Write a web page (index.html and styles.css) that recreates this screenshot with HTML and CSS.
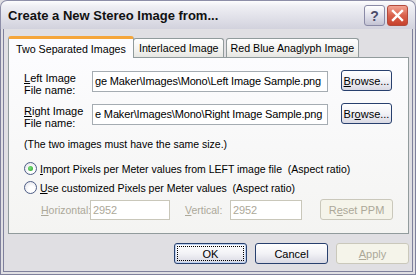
FILE: index.html
```html
<!DOCTYPE html>
<html lang="en">
  <head>
    <meta charset="UTF-8" />
    <title>Create a New Stereo Image from...</title>
    <link rel="stylesheet" href="styles.css">
  </head>
  <body>
    <div class="window">
      <div class="titlebar">
        <span class="title">Create a New Stereo Image from...</span>
        <div class="caption-btn help">?</div>
        <div class="caption-btn close">
          <svg width="13" height="13" viewBox="0 0 13 13">
            <path d="M2 2 L11 11 M11 2 L2 11" stroke="#fff" stroke-width="2.4" stroke-linecap="square" />
          </svg>
        </div>
      </div>

      <div class="client">
        <div class="tabs">
          <div class="tab active">Two Separated Images</div>
          <div class="tab">Interlaced Image</div>
          <div class="tab">Red Blue Anaglyph Image</div>
        </div>

        <div class="panel">
          <div class="file-row">
            <label class="file-label"><u>L</u>eft Image<br>File name:</label>
            <div class="textbox">ge Maker\Images\Mono\Left Image Sample.png</div>
            <button class="btn browse"><u>B</u>rowse...</button>
          </div>
          <div class="file-row">
            <label class="file-label"><u>R</u>ight Image<br>File name:</label>
            <div class="textbox">e Maker\Images\Mono\Right Image Sample.png</div>
            <button class="btn browse">Br<u>o</u>wse...</button>
          </div>

          <p class="note">(The two images must have the same size.)</p>

          <div class="radio-row">
            <span class="radio checked"></span>
            <span><u>I</u>mport Pixels per Meter values from LEFT image file&nbsp; (Aspect ratio)</span>
          </div>
          <div class="radio-row">
            <span class="radio"></span>
            <span><u>U</u>se customized Pixels per Meter values&nbsp; (Aspect ratio)</span>
          </div>

          <div class="ppm-row">
            <span class="dim-label"><u>H</u>orizontal:</span>
            <div class="textbox disabled ppm-h">2952</div>
            <span class="dim-label vert"><u>V</u>ertical:</span>
            <div class="textbox disabled ppm-v">2952</div>
            <button class="btn disabled reset">R<u>e</u>set PPM</button>
          </div>
        </div>

        <div class="actions">
          <button class="btn default">OK</button>
          <button class="btn">Cancel</button>
          <button class="btn disabled"><u>A</u>pply</button>
        </div>
      </div>
    </div>
  </body>
</html>
```

FILE: styles.css
```css
body {
  margin: 0;
  padding: 0;
  font-family: "Liberation Sans", Arial, sans-serif;
  font-size: 11px;
  color: #000;
  background: #fff;
}

.window {
  width: 416px;
  height: 275px;
  display: flex;
  flex-direction: column;
  background: #e0dfe3;
}

.titlebar {
  height: 29px;
  box-sizing: border-box;
  display: flex;
  align-items: center;
  padding: 1px 7px 0 7px;
  border: 1px solid #8d8ea8;
  border-bottom: none;
  border-radius: 7px 7px 0 0;
  background: linear-gradient(#fdfdfe 0%, #efeff4 18%, #e2e2ea 55%, #d2d2dd 100%);
}

.title {
  flex: 1;
  font-size: 13px;
  font-weight: bold;
  color: #111;
}

.caption-btn {
  width: 21px;
  height: 21px;
  box-sizing: border-box;
  border-radius: 3px;
  display: flex;
  align-items: center;
  justify-content: center;
}

.help {
  margin-right: 2px;
  border: 1px solid #8a8aa6;
  background: linear-gradient(#ffffff, #dcdce8 60%, #c3c3d3);
  color: #4c4c68;
  font-size: 14px;
  font-weight: bold;
}

.close {
  border: 1px solid #b24a3c;
  background: linear-gradient(#f2a493, #d9614c 50%, #c7412d);
}

.client {
  flex: 1;
  display: flex;
  flex-direction: column;
  padding: 7px 3px 7px 4px;
  border: 4px double #7f809c;
  border-top: none;
}

.tabs {
  display: flex;
  align-items: flex-end;
  height: 21px;
  font-size: 10.7px;
}

.tab {
  height: 19px;
  box-sizing: border-box;
  padding: 3px 4px 0 4px;
  border: 1px solid #919b9c;
  border-bottom: none;
  border-radius: 3px 3px 0 0;
  background: linear-gradient(#ffffff, #f3f3f0 60%, #e6e6e2);
  margin-right: 2px;
  white-space: nowrap;
}

.tab.active {
  position: relative;
  height: 22px;
  margin-bottom: -1px;
  margin-right: -1px;
  padding: 4px 7px 0 7px;
  background: #fcfcfe;
  border-top: 3px solid #f5a63a;
  z-index: 1;
}

.tab.active + .tab {
  padding-left: 5px;
}

.panel {
  height: 177px;
  box-sizing: border-box;
  border: 1px solid #919b9c;
  background: linear-gradient(#fcfcfe, #f4f4f2);
  padding: 12px 12px 0 15px;
  font-size: 10.5px;
}

.file-row {
  display: flex;
  align-items: flex-start;
  margin-bottom: 7px;
}

.file-label {
  width: 68px;
  line-height: 12px;
  padding-top: 2px;
  font-size: 11px;
}

.textbox {
  box-sizing: border-box;
  height: 21px;
  line-height: 19px;
  padding: 0 2px;
  border: 1px solid #a5acb2;
  background: #fff;
  white-space: nowrap;
  overflow: hidden;
  font-size: 11px;
  letter-spacing: -0.15px;
}

.file-row .textbox {
  width: 236px;
  margin-top: 1px;
}

.btn {
  box-sizing: border-box;
  height: 21px;
  padding: 0;
  border: 1px solid #28406e;
  border-radius: 3px;
  background: linear-gradient(#ffffff, #f2f2f6 50%, #d9d9e3);
  font-family: inherit;
  font-size: 11px;
  color: #000;
}

.browse {
  width: 51px;
  margin-left: 13px;
}

.btn.disabled {
  border-color: #cac8bb;
  background: #f5f4ea;
  color: #aca899;
}

.btn.default {
  box-shadow: inset 0 0 0 1px #bcd0ef;
  outline: 1px dotted #000;
  outline-offset: -4px;
}

.note {
  margin: 9px 0 11px 0;
  line-height: 13px;
}

.radio-row {
  display: flex;
  align-items: center;
  gap: 3px;
  height: 13px;
  margin-bottom: 6px;
}

.radio {
  width: 13px;
  height: 13px;
  box-sizing: border-box;
  border: 1px solid #4e5e86;
  border-radius: 50%;
  background: radial-gradient(circle at 60% 65%, #ffffff 30%, #dcdce4 100%);
  display: flex;
  align-items: center;
  justify-content: center;
}

.radio.checked::after {
  content: "";
  width: 5px;
  height: 5px;
  border-radius: 50%;
  background: radial-gradient(circle at 40% 40%, #7ee07e, #21a121);
}

.ppm-row {
  display: flex;
  align-items: center;
  padding-left: 17px;
  margin-top: -1px;
}

.dim-label {
  color: #aca899;
  width: 49px;
}

.dim-label.vert {
  width: 45px;
  margin-left: 15px;
}

.textbox.disabled {
  border-color: #c9c7ba;
  color: #aca899;
  height: 20px;
  line-height: 18px;
}

.ppm-h {
  width: 80px;
}

.ppm-v {
  width: 72px;
}

.reset {
  width: 73px;
  margin-left: 18px;
}

.actions {
  display: flex;
  justify-content: flex-end;
  gap: 8px;
  margin-top: 9px;
}

.actions .btn {
  width: 73px;
}
```
